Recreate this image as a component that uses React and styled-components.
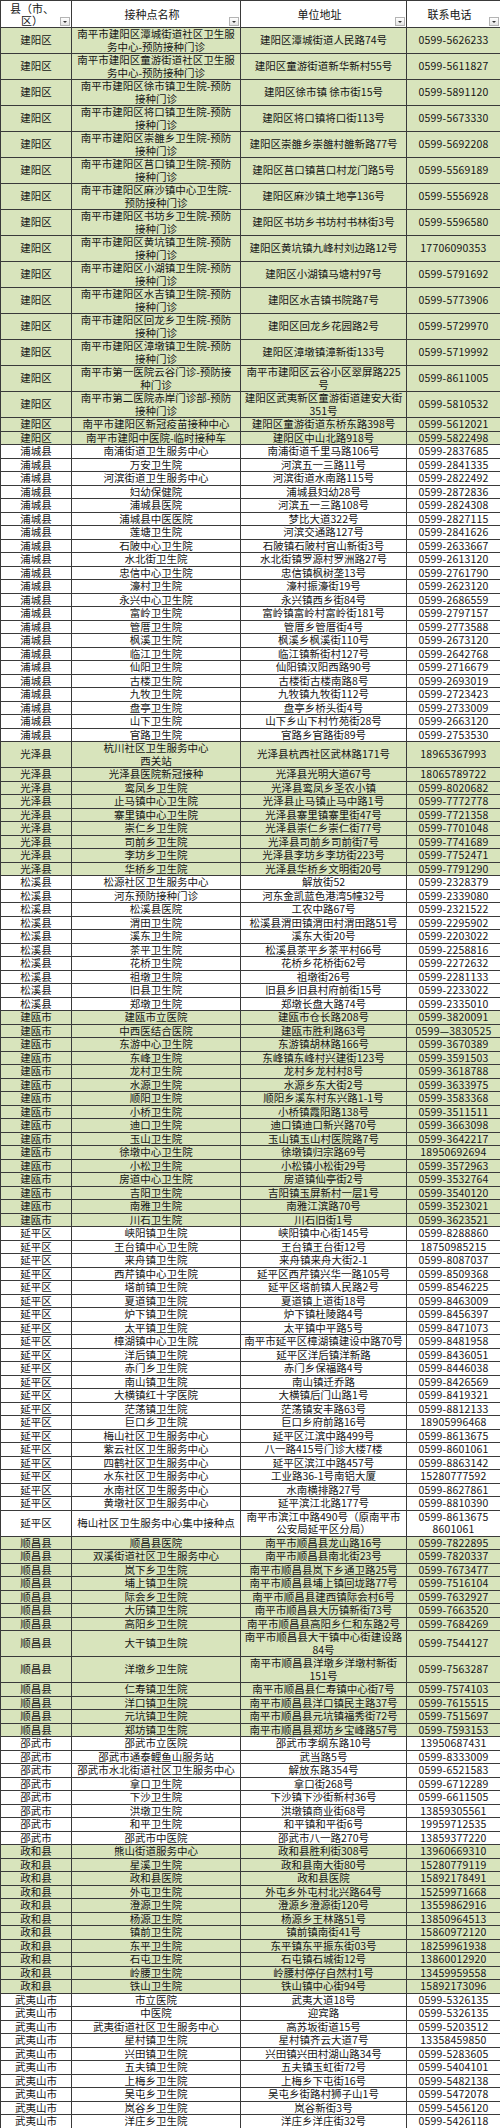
import React from "react";
import styled, { createGlobalStyle } from "styled-components";

const GlobalStyle = createGlobalStyle`
  body {
    margin: 0;
    background: #fff;
    font-family: "Noto Sans CJK SC", "Liberation Sans", sans-serif;
  }
`;

// 每组：县区名称、是否绿色底、各接种点 [名称, 地址, 电话]
const groups = [
  {
    county: "建阳区",
    green: true,
    rows: [
      ["南平市建阳区潭城街道社区卫生服\n务中心-预防接种门诊", "建阳区潭城街道人民路74号", "0599-5626233"],
      ["南平市建阳区童游街道社区卫生服\n务中心-预防接种门诊", "建阳区童游街道新华新村55号", "0599-5611827"],
      ["南平市建阳区徐市镇卫生院-预防\n接种门诊", "建阳区徐市镇 徐市街15号", "0599-5891120"],
      ["南平市建阳区将口镇卫生院-预防\n接种门诊", "建阳区将口镇将口街113号", "0599-5673330"],
      ["南平市建阳区崇雒乡卫生院-预防\n接种门诊", "建阳区崇雒乡崇雒村雒新路77号", "0599-5692208"],
      ["南平市建阳区莒口镇卫生院-预防\n接种门诊", "建阳区莒口镇莒口村龙门路5号", "0599-5569189"],
      ["南平市建阳区麻沙镇中心卫生院-\n预防接种门诊", "建阳区麻沙镇土地亭136号", "0599-5556928"],
      ["南平市建阳区书坊乡卫生院-预防\n接种门诊", "建阳区书坊乡书坊村书林街3号", "0599-5596580"],
      ["南平市建阳区黄坑镇卫生院-预防\n接种门诊", "建阳区黄坑镇九峰村刘边路12号", "17706090353"],
      ["南平市建阳区小湖镇卫生院-预防\n接种门诊", "建阳区小湖镇马塘村97号", "0599-5791692"],
      ["南平市建阳区水吉镇卫生院-预防\n接种门诊", "建阳区水吉镇书院路7号", "0599-5773906"],
      ["南平市建阳区回龙乡卫生院-预防\n接种门诊", "建阳区回龙乡花园路2号", "0599-5729970"],
      ["南平市建阳区漳墩镇卫生院-预防\n接种门诊", "建阳区漳墩镇漳新街133号", "0599-5719992"],
      ["南平市第一医院云谷门诊-预防接\n种门诊", "南平市建阳区云谷小区翠屏路225\n号", "0599-8611005"],
      ["南平市第二医院赤岸门诊部-预防\n接种门诊", "建阳区武夷新区童游街道建安大街\n351号", "0599-5810532"],
      ["南平市建阳区新冠疫苗接种中心", "建阳区童游街道东桥东路398号", "0599-5612021"],
      ["南平市建阳中医院-临时接种车", "建阳区中山北路918号", "0599-5822498"],
    ],
  },
  {
    county: "浦城县",
    rows: [
      ["南浦街道卫生服务中心", "南浦街道千里马路106号", "0599-2837685"],
      ["万安卫生院", "河滨五一三路11号", "0599-2841335"],
      ["河滨街道卫生服务中心", "河滨街道水南路115号", "0599-2822492"],
      ["妇幼保健院", "浦城县妇幼28号", "0599-2872836"],
      ["浦城县医院", "河滨五一三路108号", "0599-2824308"],
      ["浦城县中医医院", "梦比大道322号", "0599-2827115"],
      ["莲塘卫生院", "河滨交通路127号", "0599-2841626"],
      ["石陂中心卫生院", "石陂镇石陂村官山新街3号", "0599-2633667"],
      ["水北街卫生院", "水北街镇罗源村罗洲路27号", "0599-2613120"],
      ["忠信中心卫生院", "忠信镇枫树垄13号", "0599-2761790"],
      ["濠村卫生院", "濠村振濠街19号", "0599-2623120"],
      ["永兴中心卫生院", "永兴镇西乡街84号", "0599-2686559"],
      ["富岭卫生院", "富岭镇富岭村富岭街181号", "0599-2797157"],
      ["管厝卫生院", "管厝乡管厝街4号", "0599-2773588"],
      ["枫溪卫生院", "枫溪乡枫溪街110号", "0599-2673120"],
      ["临江卫生院", "临江镇新街村127号", "0599-2642768"],
      ["仙阳卫生院", "仙阳镇汉阳西路90号", "0599-2716679"],
      ["古楼卫生院", "古楼街古楼南路8号", "0599-2693019"],
      ["九牧卫生院", "九牧镇九牧街112号", "0599-2723423"],
      ["盘亭卫生院", "盘亭乡桥头街4号", "0599-2733009"],
      ["山下卫生院", "山下乡山下村竹苑街28号", "0599-2663120"],
      ["官路卫生院", "官路乡官路街89号", "0599-2753530"],
    ],
  },
  {
    county: "光泽县",
    green: true,
    rows: [
      ["杭川社区卫生服务中心\n西关站", "光泽县杭西社区武林路171号", "18965367993"],
      ["光泽县医院新冠接种", "光泽县光明大道67号", "18065789722"],
      ["鸾凤乡卫生院", "光泽县鸾凤乡圣农小镇", "0599-8020682"],
      ["止马镇中心卫生院", "光泽县止马镇止马中路1号", "0599-7772778"],
      ["寨里镇中心卫生院", "光泽县寨里镇寨里街47号", "0599-7721358"],
      ["崇仁乡卫生院", "光泽县崇仁乡崇仁街77号", "0599-7701048"],
      ["司前乡卫生院", "光泽县司前乡司前街7号", "0599-7741689"],
      ["李坊乡卫生院", "光泽县李坊乡李坊街223号", "0599-7752471"],
      ["华桥乡卫生院", "光泽县华桥乡文明街20号", "0599-7791290"],
    ],
  },
  {
    county: "松溪县",
    rows: [
      ["松源社区卫生服务中心", "解放街52", "0599-2328379"],
      ["河东预防接种门诊", "河东金凯蓝色港湾5幢32号", "0599-2339080"],
      ["松溪县医院", "工农中路67号", "0599-2321522"],
      ["渭田卫生院", "松溪县渭田镇渭田村渭田路51号", "0599-2295902"],
      ["溪东卫生院", "溪东大街20号", "0599-2203022"],
      ["茶平卫生院", "松溪县茶平乡茶平村66号", "0599-2258816"],
      ["花桥卫生院", "花桥乡花桥街62号", "0599-2272632"],
      ["祖墩卫生院", "祖墩街26号", "0599-2281133"],
      ["旧县卫生院", "旧县乡旧县村府前街15号", "0599-2233022"],
      ["郑墩卫生院", "郑墩长盘大路74号", "0599-2335010"],
    ],
  },
  {
    county: "建瓯市",
    green: true,
    rows: [
      ["建瓯市立医院", "建瓯市仓长路208号", "0599-3820091"],
      ["中西医结合医院", "建瓯市胜利路63号", "0599—3830525"],
      ["东游中心卫生院", "东游镇胡林路166号", "0599-3670389"],
      ["东峰卫生院", "东峰镇东峰村兴建街123号", "0599-3591503"],
      ["龙村卫生院", "龙村乡龙村村8号", "0599-3618788"],
      ["水源卫生院", "水源乡东大街2号", "0599-3633975"],
      ["顺阳卫生院", "顺阳乡溪东村东兴路1-1号", "0599-3583368"],
      ["小桥卫生院", "小桥镇霞阳路138号", "0599-3511511"],
      ["迪口卫生院", "迪口镇迪口新兴路70号", "0599-3663098"],
      ["玉山卫生院", "玉山镇玉山村医院路7号", "0599-3642217"],
      ["徐墩中心卫生院", "徐墩镇归宗路69号", "18950692694"],
      ["小松卫生院", "小松镇小松街29号", "0599-3572963"],
      ["房道中心卫生院", "房道镇仙亭街2号", "0599-3532764"],
      ["吉阳卫生院", "吉阳镇玉屏新村一层1号", "0599-3540120"],
      ["南雅卫生院", "南雅江滨路70号", "0599-3523021"],
      ["川石卫生院", "川石旧街1号", "0599-3623521"],
    ],
  },
  {
    county: "延平区",
    rows: [
      ["峡阳镇卫生院", "峡阳镇中心街145号", "0599-8288860"],
      ["王台镇中心卫生院", "王台镇王台街12号", "18750985215"],
      ["来舟镇卫生院", "来舟镇来舟大街2-1", "0599-8087037"],
      ["西芹镇中心卫生院", "延平区西芹镇兴华一路105号", "0599-8509368"],
      ["塔前镇卫生院", "延平区塔前镇人民路2号", "0599-8546225"],
      ["夏道镇卫生院", "夏道镇上道街18号", "0599-8463009"],
      ["炉下镇卫生院", "炉下镇杜陵路4号", "0599-8456397"],
      ["太平镇卫生院", "太平镇中平路5号", "0599-8471073"],
      ["樟湖镇中心卫生院", "南平市延平区樟湖镇建设中路70号", "0599-8481958"],
      ["洋后镇卫生院", "延平区洋后镇洋新路", "0599-8436051"],
      ["赤门乡卫生院", "赤门乡保福路4号", "0599-8446038"],
      ["南山镇卫生院", "南山镇迁乔路", "0599-8426569"],
      ["大横镇红十字医院", "大横镇后门山路1号", "0599-8419321"],
      ["茫荡镇卫生院", "茫荡镇安丰路63号", "0599-8812133"],
      ["巨口乡卫生院", "巨口乡府前路16号", "18905996468"],
      ["梅山社区卫生服务中心", "延平区江滨中路499号", "0599-8613675"],
      ["紫云社区卫生服务中心", "八一路415号门诊大楼7楼", "0599-8601061"],
      ["四鹤社区卫生服务中心", "延平区滨江中路457号", "0599-8863142"],
      ["水东社区卫生服务中心", "工业路36-1号南铝大厦", "15280777592"],
      ["水南社区卫生服务中心", "水南横排路27号", "0599-8627861"],
      ["黄墩社区卫生服务中心", "延平滨江北路177号", "0599-8810390"],
      ["梅山社区卫生服务中心集中接种点", "南平市滨江中路490号（原南平市\n公安局延平区分局）", "0599-8613675\n8601061"],
    ],
  },
  {
    county: "顺昌县",
    green: true,
    rows: [
      ["顺昌县医院", "南平市顺昌县龙山路16号", "0599-7822895"],
      ["双溪街道社区卫生服务中心", "南平市顺昌县南北街23号", "0599-7820337"],
      ["岚下乡卫生院", "南平市顺昌县岚下乡通卫路25号", "0599-7673477"],
      ["埔上镇卫生院", "南平市顺昌县埔上镇回垅路77号", "0599-7516104"],
      ["际会乡卫生院", "南平市顺昌县建西镇际会村6号", "0599-7632927"],
      ["大历镇卫生院", "南平市顺昌县大历镇新街73号", "0599-7663520"],
      ["高阳乡卫生院", "南平市顺昌县高阳乡仁和东路2号", "0599-7684269"],
      ["大干镇卫生院", "南平市顺昌县大干镇中心街建设路\n84号", "0599-7544127"],
      ["洋墩乡卫生院", "南平市顺昌县洋墩乡洋墩村新街\n151号", "0599-7563287"],
      ["仁寿镇卫生院", "南平市顺昌县仁寿镇中心街7号", "0599-7574103"],
      ["洋口镇卫生院", "南平市顺昌县洋口镇民主路37号", "0599-7615515"],
      ["元坑镇卫生院", "南平市顺昌县元坑镇福秀街72号", "0599-7515697"],
      ["郑坊镇卫生院", "南平市顺昌县郑坊乡宝峰路57号", "0599-7593153"],
    ],
  },
  {
    county: "邵武市",
    rows: [
      ["邵武市立医院", "邵武市李纲东路10号", "13950687431"],
      ["邵武市通泰鲤鱼山服务站", "武当路5号", "0599-8333009"],
      ["邵武市水北街道社区卫生服务中心", "解放东路354号", "0599-6521583"],
      ["拿口卫生院", "拿口街268号", "0599-6712289"],
      ["下沙卫生院", "下沙镇下沙街新村36号", "0599-6611505"],
      ["洪墩卫生院", "洪墩镇商业街68号", "13859305561"],
      ["和平卫生院", "和平镇和平街6号", "19959712535"],
      ["邵武市中医院", "邵武市八一路270号", "13859377220"],
    ],
  },
  {
    county: "政和县",
    green: true,
    rows: [
      ["熊山街道服务中心", "政和县胜利街308号", "13960669310"],
      ["星溪卫生院", "政和县南大街80号", "15280779119"],
      ["政和县医院", "政和县医院", "15892178491"],
      ["外屯卫生院", "外屯乡外屯村北兴路64号", "15259971668"],
      ["澄源卫生院", "澄源乡澄源街120号", "13559862916"],
      ["杨源卫生院", "杨源乡王林路51号", "13850964513"],
      ["镇前卫生院", "镇前镇南街41号", "15860972120"],
      ["东平卫生院", "东平镇东平振东街03号", "18259961938"],
      ["石屯卫生院", "石屯镇石城街12号", "13860012920"],
      ["岭腰卫生院", "岭腰村停仔自然村1号", "13459959558"],
      ["铁山卫生院", "铁山镇中心街94号", "15892173096"],
    ],
  },
  {
    county: "武夷山市",
    rows: [
      ["市立医院", "武夷大道18号", "0599-5326135"],
      ["中医院", "迎宾路", "0599-5326135"],
      ["武夷街道社区卫生服务中心", "高苏坂街道15号", "0599-5203512"],
      ["星村镇卫生院", "星村镇齐云大道7号", "13358459850"],
      ["兴田镇卫生院", "兴田镇兴田村湖山路34号", "0599-5283605"],
      ["五夫镇卫生院", "五夫镇玉虹街72号", "0599-5404101"],
      ["上梅乡卫生院", "上梅乡下屯街16号", "0599-5482138"],
      ["吴屯乡卫生院", "吴屯乡街路村狮子山1号", "0599-5472078"],
      ["岚谷乡卫生院", "岚谷新街3号", "0599-5456120"],
      ["洋庄乡卫生院", "洋庄乡洋庄街32号", "0599-5426118"],
    ],
  },
];

const headers = ["县（市、\n区）", "接种点名称", "单位地址", "联系电话"];

export default function App() {
  return (
    <>
      <GlobalStyle />
      <Sheet>
        <colgroup>
          <col style={{ width: 71 }} />
          <col style={{ width: 169 }} />
          <col style={{ width: 166 }} />
          <col style={{ width: 94 }} />
        </colgroup>
        <thead>
          <HeaderRow>
            {headers.map((h) => (
              <HeaderCell key={h}>
                {h}
                <FilterButton />
              </HeaderCell>
            ))}
          </HeaderRow>
        </thead>
        <tbody>
          {groups.map((g) =>
            g.rows.map((r, i) => {
              const tall = r.some((t) => t.includes("\n"));
              return (
                <Row key={g.county + i} $green={g.green} $tall={tall}>
                  <Cell>{g.county}</Cell>
                  <Cell>{r[0]}</Cell>
                  <Cell>{r[1]}</Cell>
                  <Cell $num>{r[2]}</Cell>
                </Row>
              );
            })
          )}
        </tbody>
      </Sheet>
    </>
  );
}

const Sheet = styled.table`
  width: 500px;
  table-layout: fixed;
  border-collapse: collapse;
  color: #141414;
`;

const HeaderRow = styled.tr`
  height: 27px;
  background: #fff;
`;

const HeaderCell = styled.th`
  position: relative;
  border: 1px solid #3a3a3a;
  padding: 0 10px 0 2px;
  font-weight: normal;
  font-size: 11px;
  line-height: 12px;
  white-space: pre;
  text-align: center;
  vertical-align: middle;
`;

const FilterButton = styled.span`
  position: absolute;
  right: 1px;
  bottom: 1px;
  width: 8px;
  height: 7px;
  border: 1px solid #b4b4b4;
  background: linear-gradient(#ffffff, #e4e4e4);

  &::after {
    content: "";
    position: absolute;
    left: 2px;
    top: 3px;
    border-left: 2px solid transparent;
    border-right: 2px solid transparent;
    border-top: 2px solid #333;
  }
`;

const Row = styled.tr`
  height: ${(p) => (p.$tall ? "26px" : "13.5px")};
  background: ${(p) => (p.$green ? "#d8e4bc" : "#ffffff")};
`;

const Cell = styled.td`
  border: 1px solid #3a3a3a;
  padding: 0 1px;
  font-size: 10.5px;
  line-height: 12.5px;
  letter-spacing: ${(p) => (p.$num ? "0.2px" : "0")};
  white-space: pre;
  text-align: center;
  vertical-align: middle;
  overflow: hidden;
`;
